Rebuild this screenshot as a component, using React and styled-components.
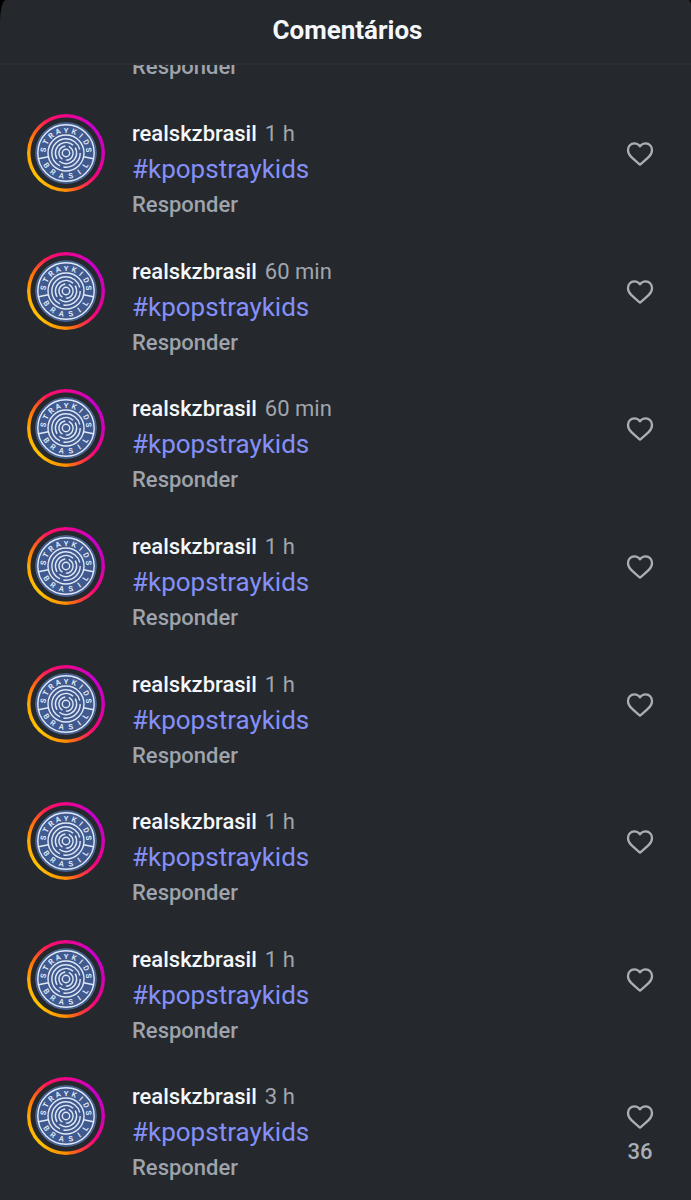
import styled, { createGlobalStyle } from "styled-components";

const comments = [
    { id: 1, user: "realskzbrasil", time: "1 h", tag: "#kpopstraykids" },
    { id: 2, user: "realskzbrasil", time: "60 min", tag: "#kpopstraykids" },
    { id: 3, user: "realskzbrasil", time: "60 min", tag: "#kpopstraykids" },
    { id: 4, user: "realskzbrasil", time: "1 h", tag: "#kpopstraykids" },
    { id: 5, user: "realskzbrasil", time: "1 h", tag: "#kpopstraykids" },
    { id: 6, user: "realskzbrasil", time: "1 h", tag: "#kpopstraykids" },
    { id: 7, user: "realskzbrasil", time: "1 h", tag: "#kpopstraykids" },
    { id: 8, user: "realskzbrasil", time: "3 h", tag: "#kpopstraykids", likes: 36 },
];

/* Avatar ---------------------------*/
const Emblem = () => {
    const top = "STRAYKIDS".split("");
    const bottom = "BRASIL".split("");

    return (
        <EmblemStyled viewBox="-31 -31 62 62" aria-hidden="true">
            <circle className="disc" r="30.3" />
            <circle r="28.2" />
            <circle r="18" />
            <path d="M-17.6 3.8L-27.6 5.8M17.6 3.8L27.6 5.8" />
            <circle r="14.2" pathLength="100" strokeDasharray="28 4 64 4" transform="rotate(0)" />
            <circle r="10.6" pathLength="100" strokeDasharray="44 5 46 5" transform="rotate(-30)" />
            <circle r="7.1" pathLength="100" strokeDasharray="40 8 44 8" transform="rotate(120)" />
            <circle r="3.7" />
            {top.map((letter, i) => (
                <text key={i} y="-20.3" transform={`rotate(${(i - 4) * 20.5})`}>
                    {letter}
                </text>
            ))}
            {bottom.map((letter, i) => (
                <text key={i} y="25.7" transform={`rotate(${(2.5 - i) * 23})`}>
                    {letter}
                </text>
            ))}
        </EmblemStyled>
    );
};

const HeartIcon = () => (
    <svg width="28" height="26" viewBox="0 0 28 26" aria-hidden="true">
        <path
            d="M14 23.6C11.6 21.4 8 18.7 5.2 15.9C3 13.7 2 11.8 2 9.2C2 5.3 4.8 2.4 8.3 2.4C10.8 2.4 12.7 3.4 14 5.4C15.3 3.4 17.2 2.4 19.7 2.4C23.2 2.4 26 5.3 26 9.2C26 11.8 25 13.7 22.8 15.9C20 18.7 16.4 21.4 14 23.6Z"
            fill="none"
            stroke="currentColor"
            strokeWidth="2.3"
            strokeLinejoin="round"
        />
    </svg>
);

/* Comment ---------------------------*/
const Comment = ({ user, time, tag, likes }) => {
    return (
        <Row>
            <StoryRing type="button" aria-label={user}>
                <Emblem />
            </StoryRing>
            <Body>
                <Meta>
                    <User href="#user">{user}</User>
                    <Time>{time}</Time>
                </Meta>
                <Hashtag href="#tag">{tag}</Hashtag>
                <Reply type="button">Responder</Reply>
            </Body>
            <Like type="button" aria-label="Curtir">
                <HeartIcon />
                {likes && <span>{likes}</span>}
            </Like>
        </Row>
    );
};

const App = () => {
    return (
        <>
            <GlobalStyle />
            <Sheet>
                <Header>
                    <h1>Comentários</h1>
                </Header>
                <Peek>
                    <Reply type="button">Responder</Reply>
                </Peek>
                <List>
                    {comments.map((comment) => (
                        <Comment key={comment.id} {...comment} />
                    ))}
                </List>
            </Sheet>
        </>
    );
};

export default App;

const GlobalStyle = createGlobalStyle`
    * {
        box-sizing: border-box;
    }

    body {
        margin: 0;
        background: #000;
        font-family: Roboto, "Liberation Sans", sans-serif;
    }

    a {
        text-decoration: none;
    }
`;

const PlainButton = styled.button`
    padding: 0;
    border: 0;
    background: none;
    font-family: inherit;
    font-size: 22px;
    font-weight: 500;
    cursor: pointer;
`;

const Sheet = styled.main`
    display: flex;
    flex-direction: column;
    min-height: 100vh;
    background: #25282d;
    border-radius: 6px 3px 0 0 / 22px 5px 0 0;
`;

const Header = styled.header`
    height: 65px;
    border-bottom: solid 2px #2b2e33;

    h1 {
        margin: 0;
        padding: 14px 0 0 4px;
        color: #f5f7fa;
        font-size: 26px;
        font-weight: 700;
        line-height: 32px;
        text-align: center;
    }
`;

/* tail of the comment that is scrolled under the header */
const Peek = styled.div`
    display: flex;
    align-items: flex-end;
    height: 34px;
    padding: 0 0 15px 132px;
    overflow: hidden;
`;

const List = styled.ul`
    display: flex;
    flex: 1;
    flex-direction: column;
    margin: 0;
    padding: 0;
    list-style: none;
`;

const Row = styled.li`
    display: flex;
    flex: 1;
    align-items: flex-start;
    padding: 15px 36px 12px 27px;
`;

const StoryRing = styled(PlainButton)`
    display: grid;
    place-items: center;
    flex: none;
    width: 78px;
    height: 78px;
    border-radius: 50%;
    background:
        radial-gradient(circle, #25282d 35px, transparent 36px),
        conic-gradient(
            #f0048c,
            #c800cc 45deg,
            #d400b8 90deg,
            #f4047c 130deg,
            #ff4a2c 160deg,
            #ff8a00 180deg,
            #ffc400 225deg,
            #ffa800 270deg,
            #ff6a10 300deg,
            #ff1460 330deg,
            #f0048c
        );
`;

const EmblemStyled = styled.svg`
    width: 62px;
    height: 62px;
    fill: none;
    stroke: #dfe8f6;
    stroke-width: 1.4;

    .disc {
        fill: #405a90;
        stroke: #4f6a98;
        stroke-width: 1;
    }

    text {
        fill: #e6edf9;
        stroke: none;
        font-size: 7.5px;
        font-weight: 600;
        text-anchor: middle;
    }
`;

const Body = styled.div`
    display: flex;
    flex: 1;
    flex-direction: column;
    align-items: flex-start;
    padding-left: 27px;
`;

const Meta = styled.div`
    display: flex;
    gap: 8px;
    padding-top: 4px;
    font-size: 22px;
    line-height: 32px;
`;

const User = styled.a`
    color: #f5f7fa;
    font-weight: 500;
`;

const Time = styled.span`
    color: #a0a5ae;
`;

const Hashtag = styled.a`
    color: #8490f8;
    font-size: 26px;
    line-height: 38px;
`;

const Reply = styled(PlainButton)`
    color: #9ea3ac;
    line-height: 34px;
`;

const Like = styled(PlainButton)`
    display: flex;
    flex-direction: column;
    align-items: center;
    gap: 8px;
    width: 30px;
    padding-top: 27px;
    color: #a9aeb7;
    line-height: 28px;
`;
